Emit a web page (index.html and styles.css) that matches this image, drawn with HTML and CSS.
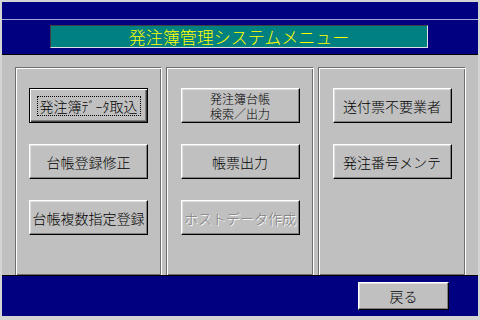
FILE: index.html
```html
<!DOCTYPE html>
<html lang="ja">
<head>
    <meta charset="UTF-8">
    <title>発注簿管理システムメニュー</title>
    <link rel="stylesheet" href="styles.css">
</head>
<body>
    <div class="window">
        <div class="header">
            <div class="header-strip"></div>
            <div class="title-box">発注簿管理システムメニュー</div>
        </div>

        <div class="main">
            <div class="panel">
                <button class="btn btn-default"><span class="focus">発注簿ﾃﾞｰﾀ取込</span></button>
                <button class="btn">台帳登録修正</button>
                <button class="btn">台帳複数指定登録</button>
            </div>
            <div class="panel">
                <button class="btn btn-small">発注簿台帳<br>検索／出力</button>
                <button class="btn">帳票出力</button>
                <button class="btn" disabled>ホストデータ作成</button>
            </div>
            <div class="panel">
                <button class="btn">送付票不要業者</button>
                <button class="btn">発注番号メンテ</button>
            </div>
        </div>

        <div class="footer">
            <button class="btn btn-back">戻る</button>
        </div>
    </div>
</body>
</html>
```

FILE: styles.css
```css
body {
    margin: 0;
    padding: 2px 2px 4px 2px;
    background: #d4d4d4;
    font-family: "Noto Sans CJK JP", sans-serif;
    font-weight: 300;
}

.window {
    width: 476px;
    height: 314px;
    display: flex;
    flex-direction: column;
    background: #000080;
}

/* ヘッダー */
.header {
    height: 52px;
}

.header-strip {
    height: 17px;
    border-bottom: 1px solid #a8a8d8;
}

.title-box {
    margin: 5px 0 0 48px;
    width: 376px;
    height: 21px;
    background: #008080;
    color: #ffff00;
    font-size: 17px;
    line-height: 21px;
    text-align: center;
    border: 1px solid;
    border-color: #404040 #e0e0e0 #e0e0e0 #404040;
}

/* メイン */
.main {
    height: 221px;
    border-top: 1px solid #000;
    background: #c0c0c0;
    display: flex;
    gap: 4px;
    padding: 12px 0 0 13px;
    box-sizing: border-box;
}

.panel {
    width: 145px;
    height: 187px;
    border: 1px solid;
    border-color: #707070 #fff #fff #707070;
    box-shadow: inset 1px 1px 0 #fff, inset -1px -1px 0 #707070;
    display: flex;
    flex-direction: column;
    align-items: center;
    gap: 21px;
    padding-top: 20px;
}

.panel + .panel {
    width: 146px;
}

.btn {
    width: 119px;
    height: 35px;
    padding: 0;
    background: #c0c0c0;
    border: 1px solid;
    border-color: #fff #000 #000 #fff;
    box-shadow: inset -1px -1px 0 #808080, inset 1px 1px 0 #dfdfdf;
    font-family: "Noto Sans CJK JP", sans-serif;
    font-weight: 300;
    font-size: 14px;
    color: #000;
    display: flex;
    align-items: center;
    justify-content: center;
    flex-shrink: 0;
}

.btn-default {
    border-color: #000;
    box-shadow: inset 1px 1px 0 #fff, inset -1px -1px 0 #404040, inset -2px -2px 0 #808080;
}

.focus {
    border: 1px dotted #000;
    padding: 0 2px;
    line-height: 18px;
}

.btn-small {
    font-size: 12px;
    line-height: 15px;
}

.btn:disabled {
    color: #808080;
    text-shadow: 1px 1px 0 #fff;
}

/* フッター */
.footer {
    flex: 1;
    border-top: 1px solid #000;
    display: flex;
    justify-content: flex-end;
    align-items: flex-start;
    padding: 6px 29px 0 0;
}

.btn-back {
    width: 91px;
    height: 28px;
}
```
